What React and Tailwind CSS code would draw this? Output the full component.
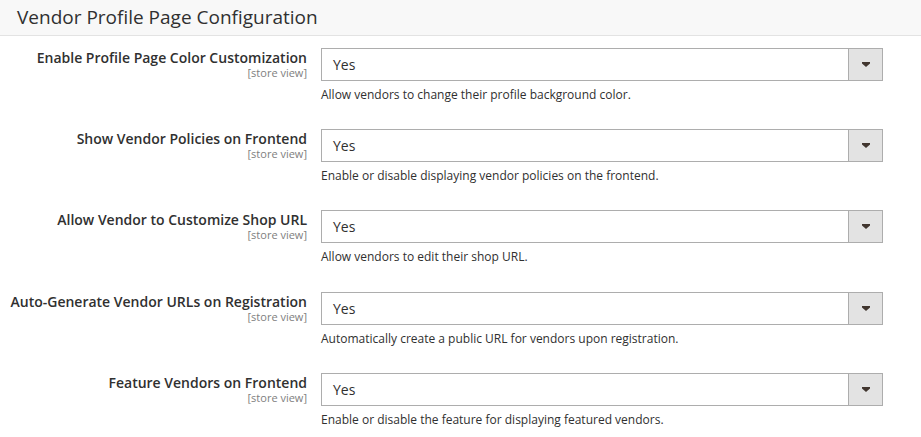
import React from 'react';

const rows = [
  {
    label: 'Enable Profile Page Color Customization',
    note: 'Allow vendors to change their profile background color.',
  },
  {
    label: 'Show Vendor Policies on Frontend',
    note: 'Enable or disable displaying vendor policies on the frontend.',
  },
  {
    label: 'Allow Vendor to Customize Shop URL',
    note: 'Allow vendors to edit their shop URL.',
    tall: true,
  },
  {
    label: 'Auto-Generate Vendor URLs on Registration',
    note: 'Automatically create a public URL for vendors upon registration.',
  },
  {
    label: 'Feature Vendors on Frontend',
    note: 'Enable or disable the feature for displaying featured vendors.',
  },
];

const SelectBox = ({ value }) => (
  <div className="flex h-[33px] w-[562px] border border-[#adadad] bg-white">
    <div className="flex-1 pl-[11px] flex items-center text-[14px] text-[#303030]">{value}</div>
    <div className="w-[34px] flex items-center justify-center bg-[#e3e3e3] border-l border-[#adadad]">
      <svg width="8" height="5" viewBox="0 0 8 5">
        <path d="M0 0 H8 V1.5 L4 5 L0 1.5 Z" fill="#41362f" />
      </svg>
    </div>
  </div>
);

export default function App() {
  return (
    <div className="w-[921px] h-[437px] bg-white overflow-hidden font-['Open_Sans',sans-serif] text-[#303030]">
      <div className="h-[36px] bg-[#f8f8f8] border-b border-[#e3e3e3] pl-[17px] flex items-center">
        <h2 className="text-[19px] leading-none text-[#303030]">Vendor Profile Page Configuration</h2>
      </div>

      <div className="pt-[12px]">
        {rows.map((row, index) => (
          <div key={index} className={`flex items-start ${row.tall ? 'h-[82px]' : 'h-[81px]'}`}>
            {/* Label */}
            <div className="w-[307px] text-right pt-[1px]">
              <div className="text-[14px] font-semibold leading-[18px] text-[#303030]">{row.label}</div>
              <div className="text-[11px] leading-[12px] text-[#808080]">[store view]</div>
            </div>

            {/* Field */}
            <div className="ml-[14px]">
              <SelectBox value="Yes" />
              <p className="mt-[6px] text-[12px] leading-[16px] text-[#303030]">{row.note}</p>
            </div>
          </div>
        ))}
      </div>
    </div>
  );
}
